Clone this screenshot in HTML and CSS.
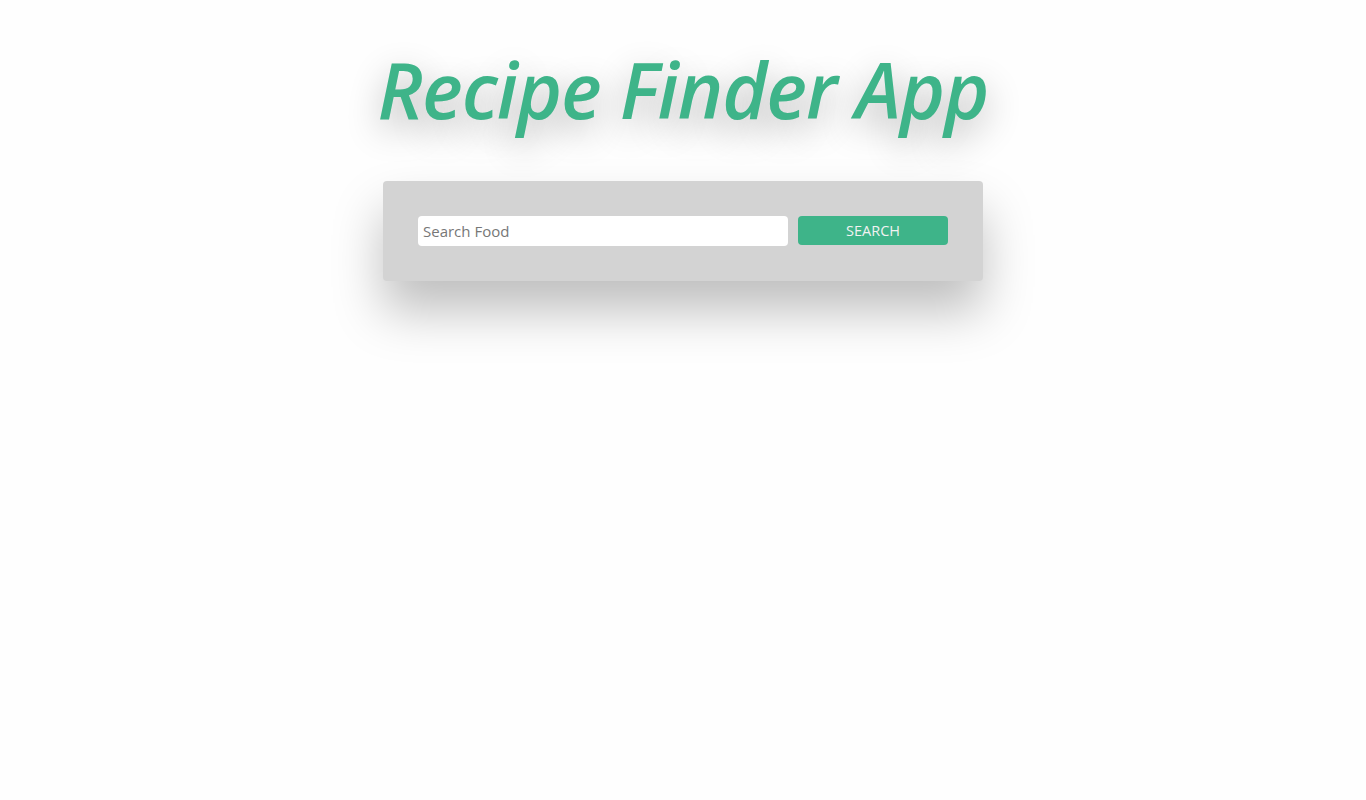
FILE: index.html
```html
<!DOCTYPE html>
<html lang="en">
<head>
<meta charset="utf-8">
<title>Recipe Finder App</title>
<link rel="stylesheet" href="styles.css">
</head>
<body>
<main class="app">
  <h1 class="title">Recipe Finder App</h1>
  <form class="search-card" onsubmit="return false">
    <input class="search-input" type="text" placeholder="Search Food">
    <button class="search-btn" type="submit">SEARCH</button>
  </form>
</main>
</body>
</html>
```

FILE: styles.css
```css
* { box-sizing: border-box; }
html, body { margin: 0; padding: 0; }
html { background: #fefefe; }
body {
  min-height: 100vh;
  background: #fefefe;
  font-family: "Open Sans", "Liberation Sans", sans-serif;
}
.app {
  display: flex;
  flex-direction: column;
  align-items: center;
  padding-top: 40px;
  min-height: 100vh;
}
.title {
  margin: 0;
  font-size: 77px;
  font-style: italic;
  font-weight: 600;
  color: #3eb489;
  line-height: 100px;
  letter-spacing: -1px;
  text-shadow: 0 12px 35px rgba(0, 0, 0, 0.3);
}
.search-card {
  margin-top: 41px;
  width: 600px;
  height: 100px;
  padding: 35px;
  background: #d3d3d3;
  border-radius: 4px;
  display: flex;
  gap: 10px;
  align-items: flex-start;
  box-shadow: 0 30px 50px rgba(0, 0, 0, 0.25);
}
.search-input {
  width: 370px;
  height: 30px;
  border: none;
  border-radius: 4px;
  padding: 0 5px;
  font-family: inherit;
  font-size: 15px;
  color: #333;
  background: #fff;
  outline: none;
}
.search-input::placeholder { color: #777; }
.search-btn {
  width: 150px;
  height: 29px;
  border: none;
  border-radius: 4px;
  background: #3eb489;
  color: #f2f2f2;
  font-family: inherit;
  font-size: 14.5px;
  cursor: pointer;
}
```
